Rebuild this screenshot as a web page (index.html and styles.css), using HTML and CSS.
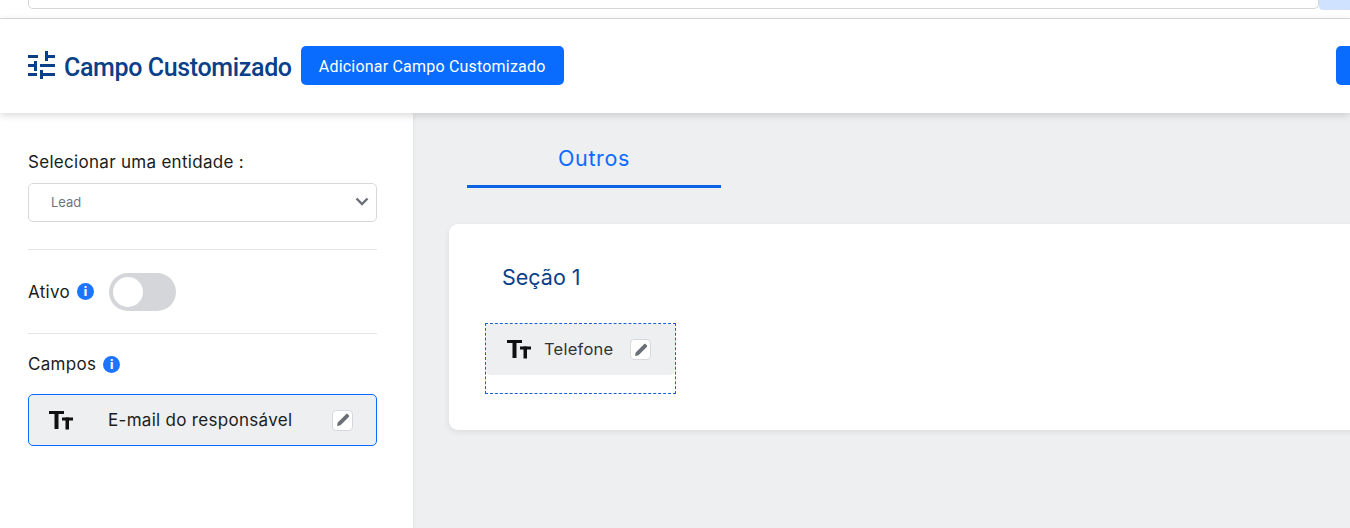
FILE: index.html
```html
<!DOCTYPE html>
<html lang="pt-BR">
<head>
    <meta charset="UTF-8">
    <title>Campo Customizado</title>
    <link rel="stylesheet" href="styles.css">
</head>
<body>
    <!-- Top search strip -->
    <div class="top-strip">
        <div class="search-box"></div>
        <div class="search-button"></div>
    </div>

    <!-- Header -->
    <header class="header">
        <svg class="title-icon" width="27" height="28" viewBox="0 0 27 28" fill="#0a3f8a">
            <rect x="0" y="4" width="10" height="3"/><rect x="17" y="0" width="3" height="10"/><rect x="20" y="4" width="7" height="3"/>
            <rect x="0" y="13" width="6" height="3"/><rect x="6" y="10" width="3" height="10"/><rect x="12" y="13" width="15" height="3"/>
            <rect x="0" y="22" width="9" height="3"/><rect x="12" y="19" width="3" height="9"/><rect x="15" y="22" width="12" height="3"/>
        </svg>
        <h1 class="title">Campo Customizado</h1>
        <button class="btn-add">Adicionar Campo Customizado</button>
        <button class="btn-right"></button>
    </header>

    <div class="content">
        <!-- Sidebar -->
        <aside class="sidebar">
            <label class="field-label">Selecionar uma entidade :</label>
            <div class="select">
                <span class="select-value">Lead</span>
                <svg width="14" height="9" viewBox="0 0 14 9" fill="none" stroke="#6b6f78" stroke-width="2.400"><path d="M1.500 1.500 7 7l5.500-5.500"/></svg>
            </div>
            <hr class="divider divider-first">
            <div class="active-row">
                <span>Ativo</span>
                <span class="info">i</span>
                <span class="toggle"><span class="toggle-knob"></span></span>
            </div>
            <hr class="divider">
            <div class="fields-row">
                <span>Campos</span>
                <span class="info">i</span>
            </div>
            <div class="field-card">
                <svg class="tt" width="24" height="19" viewBox="0 0 24 19" fill="#111">
                    <rect x="0" y="0" width="15" height="3"/><rect x="5.500" y="0" width="4" height="18"/>
                    <rect x="13" y="6.500" width="11" height="3"/><rect x="16.500" y="6.500" width="3.500" height="12"/>
                </svg>
                <span class="field-name">E-mail do responsável</span>
                <span class="edit">
                    <svg width="14" height="14" viewBox="0 0 14 14" fill="#6b6f78"><path d="M1 13l.7-3.500L10 1.200c.5-.5 1.200-.5 1.700 0l1.100 1.100c.5.5.5 1.200 0 1.700L4.500 12.300z"/></svg>
                </span>
            </div>
        </aside>

        <!-- Main -->
        <main class="main">
            <div class="tab">Outros</div>
            <section class="section-card">
                <h2 class="section-title">Seção 1</h2>
                <div class="dropzone">
                    <div class="drop-item">
                        <svg class="tt" width="24" height="19" viewBox="0 0 24 19" fill="#111">
                            <rect x="0" y="0" width="15" height="3"/><rect x="5.500" y="0" width="4" height="18"/>
                            <rect x="13" y="6.500" width="11" height="3"/><rect x="16.500" y="6.500" width="3.500" height="12"/>
                        </svg>
                        <span class="drop-name">Telefone</span>
                        <span class="edit">
                            <svg width="14" height="14" viewBox="0 0 14 14" fill="#6b6f78"><path d="M1 13l.7-3.500L10 1.200c.5-.5 1.200-.5 1.700 0l1.100 1.100c.5.5.5 1.200 0 1.700L4.500 12.300z"/></svg>
                        </span>
                    </div>
                </div>
            </section>
        </main>
    </div>
</body>
</html>
```

FILE: styles.css
```css
/* General */
* {
    box-sizing: border-box;
}

body {
    margin: 0;
    height: 528px;
    overflow: hidden;
    display: flex;
    flex-direction: column;
    font-family: 'Inter', 'Liberation Sans', sans-serif;
    background: #eeeff1;
    color: #1a1c20;
}

/* Top strip */
.top-strip {
    height: 19px;
    flex: none;
    display: flex;
    align-items: flex-start;
    padding-left: 28px;
    background: #fff;
    border-bottom: 1px solid #dcdcdc;
}

.search-box {
    flex: 1;
    height: 9px;
    background: #fff;
    border: 1px solid #d6d6d6;
    border-top: none;
    border-radius: 0 0 5px 5px;
}

.search-button {
    width: 31px;
    height: 10px;
    background: #cfe2ff;
    border-radius: 0 0 0 4px;
}

/* Header */
.header {
    height: 94px;
    flex: none;
    display: flex;
    align-items: center;
    padding-left: 28px;
    padding-bottom: 2px;
    background: #fff;
    position: relative;
    z-index: 2;
    box-shadow: 0 2px 8px rgba(0, 0, 0, 0.16);
}

.title-icon {
    flex: none;
    margin-right: 9px;
}

.title {
    margin: 0 9px 0 0;
    padding-top: 4px;
    font-family: 'Roboto', 'Liberation Sans', sans-serif;
    font-size: 25px;
    font-weight: 500;
    letter-spacing: -0.36px;
    color: #0a3f8a;
    white-space: nowrap;
}

.btn-add {
    width: 263px;
    height: 39px;
    flex: none;
    padding: 3px 0 0;
    border: none;
    border-radius: 5px;
    background: #0a6cff;
    color: #fff;
    font-family: 'Roboto', 'Liberation Sans', sans-serif;
    font-size: 16px;
    font-weight: 400;
    letter-spacing: 0.2px;
}

.btn-right {
    width: 40px;
    height: 39px;
    flex: none;
    margin-left: auto;
    margin-right: -26px;
    border: none;
    border-radius: 5px;
    background: #0a6cff;
}

.content {
    flex: 1;
    display: flex;
    min-height: 0;
}

/* Sidebar */
.sidebar {
    width: 413px;
    flex: none;
    padding: 38px 36px 0 28px;
    background: #fff;
    font-size: 17px;
    letter-spacing: 0.3px;
    box-shadow: 1px 0 3px rgba(0, 0, 0, 0.05);
}

.field-label {
    display: block;
    height: 22px;
    line-height: 22px;
    white-space: nowrap;
}

.select {
    height: 39px;
    margin-top: 10px;
    padding: 0 7px 2px 22px;
    display: flex;
    align-items: center;
    justify-content: space-between;
    border: 1px solid #d6d8dc;
    border-radius: 5px;
    font-size: 13px;
    letter-spacing: 0;
    color: #6f747c;
}

.divider {
    height: 1px;
    margin: 0;
    border: none;
    background: #e4e5e8;
}

.divider-first {
    margin-top: 27px;
}

.active-row {
    height: 83px;
    display: flex;
    align-items: center;
}

.info {
    width: 17px;
    height: 17px;
    flex: none;
    margin-left: 7px;
    display: flex;
    align-items: center;
    justify-content: center;
    border-radius: 50%;
    background: #1c74ff;
    color: #fff;
    font-size: 12px;
    font-weight: 800;
    letter-spacing: 0;
}

.toggle {
    width: 67px;
    height: 38px;
    margin-left: 15px;
    padding: 4px;
    border-radius: 19px;
    background: #d5d6da;
}

.toggle-knob {
    display: block;
    width: 30px;
    height: 30px;
    border-radius: 50%;
    background: #fff;
}

.fields-row {
    height: 60px;
    display: flex;
    align-items: center;
}

.field-card {
    height: 52px;
    display: flex;
    align-items: center;
    padding: 0 23px 0 20px;
    border: 1px solid #0a6cff;
    border-radius: 5px;
    background: #eeeff1;
}

.tt {
    flex: none;
}

.field-name {
    flex: 1;
    margin-left: 35px;
    white-space: nowrap;
}

.edit {
    width: 21px;
    height: 21px;
    flex: none;
    display: flex;
    align-items: center;
    justify-content: center;
    border: 1px solid #d6d8dc;
    border-radius: 4px;
    background: #fff;
}

/* Main area */
.main {
    flex: 1;
    min-width: 0;
    padding: 24px 0 0 36px;
}

.tab {
    width: 254px;
    height: 51px;
    margin-left: 18px;
    padding-top: 8px;
    text-align: center;
    font-size: 21.500px;
    letter-spacing: 0.65px;
    color: #0a6cff;
    border-bottom: 3px solid #0a62e6;
}

.section-card {
    height: 206px;
    margin-top: 36px;
    margin-right: -20px;
    padding: 39px 36px 0;
    background: #fff;
    border-radius: 9px;
    box-shadow: 0 2px 6px rgba(0, 0, 0, 0.08);
}

.section-title {
    margin: 0 0 0 17px;
    height: 28px;
    line-height: 28px;
    font-size: 21.500px;
    font-weight: 400;
    color: #0a3f8a;
}

.dropzone {
    width: 191px;
    height: 71px;
    margin-top: 32px;
    border: 1px dashed #1a5fd6;
}

.drop-item {
    height: 51px;
    display: flex;
    align-items: center;
    padding-left: 21px;
    background: #eeeff1;
    border-radius: 0 0 5px 5px;
}

.drop-name {
    width: 86px;
    margin-left: 13px;
    padding-bottom: 2px;
    font-size: 16.500px;
    letter-spacing: 0.25px;
    color: #333;
    white-space: nowrap;
}
```
